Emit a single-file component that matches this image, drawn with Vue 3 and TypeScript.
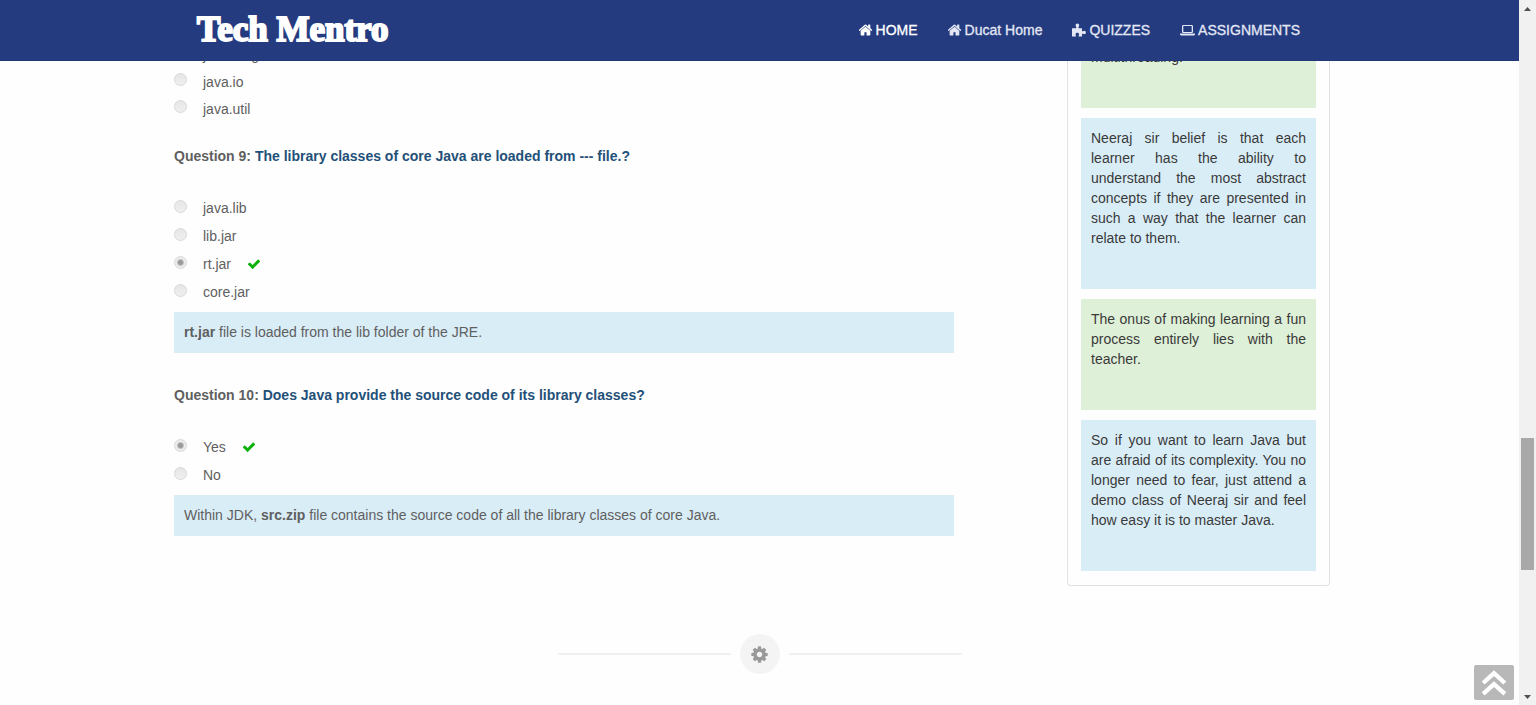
<script setup lang="ts">
import { reactive } from 'vue'

interface Option {
  text: string
  correct?: boolean
}

interface Question {
  number: number
  title: string
  options: Option[]
  chosen: string
  note: { text: string; bold?: boolean }[]
}

interface NavItem {
  label: string
  icon: 'home' | 'puzzle' | 'laptop'
  active?: boolean
}

const navItems: NavItem[] = [
  { label: 'HOME', icon: 'home', active: true },
  { label: 'Ducat Home', icon: 'home' },
  { label: 'QUIZZES', icon: 'puzzle' },
  { label: 'ASSIGNMENTS', icon: 'laptop' },
]

const previousOptions: string[] = ['java.lang', 'java.io', 'java.util']

const questions = reactive<Question[]>([
  {
    number: 9,
    title: 'The library classes of core Java are loaded from --- file.?',
    options: [{ text: 'java.lib' }, { text: 'lib.jar' }, { text: 'rt.jar', correct: true }, { text: 'core.jar' }],
    chosen: 'rt.jar',
    note: [{ text: 'rt.jar', bold: true }, { text: ' file is loaded from the lib folder of the JRE.' }],
  },
  {
    number: 10,
    title: 'Does Java provide the source code of its library classes?',
    options: [{ text: 'Yes', correct: true }, { text: 'No' }],
    chosen: 'Yes',
    note: [
      { text: 'Within JDK, ' },
      { text: 'src.zip', bold: true },
      { text: ' file contains the source code of all the library classes of core Java.' },
    ],
  },
])

const quotes: { text: string; tone: 'green' | 'blue' }[] = [
  { text: 'multithreading.', tone: 'green' },
  {
    text: 'Neeraj sir belief is that each learner has the ability to understand the most abstract concepts if they are presented in such a way that the learner can relate to them.',
    tone: 'blue',
  },
  { text: 'The onus of making learning a fun process entirely lies with the teacher.', tone: 'green' },
  {
    text: 'So if you want to learn Java but are afraid of its complexity. You no longer need to fear, just attend a demo class of Neeraj sir and feel how easy it is to master Java.',
    tone: 'blue',
  },
]
</script>

<template>
  <div class="window">
    <div class="page">
      <header class="topbar">
        <div class="topbar-inner">
          <a class="logo" href="#">Tech Mentro</a>
          <nav class="nav">
            <a v-for="item in navItems" :key="item.label" href="#" :class="['nav-link', { active: item.active }]">
              <svg v-if="item.icon === 'home'" class="nav-icon" viewBox="64 128 1664 1536" aria-hidden="true">
                <path d="M1408 992v480q0 26-19 45t-45 19h-384v-384h-256v384h-384q-26 0-45-19t-19-45v-480q0-1 .5-3t.5-3l575-474 575 474q1 2 1 6zm223-69l-62 74q-8 9-21 11h-3q-13 0-21-7l-692-577-692 577q-12 8-24 7-13-2-21-11l-62-74q-8-10-7-23.5t11-21.5l719-599q32-26 76-26t76 26l244 204v-195q0-14 9-23t23-9h192q14 0 23 9t9 23v408l219 182q10 8 11 21.5t-7 23.5z" />
              </svg>
              <svg v-else-if="item.icon === 'puzzle'" class="nav-icon puzzle" viewBox="0 0 14 14" aria-hidden="true">
                <path d="M0 5.200h3.700c.8 0 .8-.6.5-1.200-.3-.5-.6-1-.6-1.700C3.600 1.200 4.400.4 5.400.4s1.800.8 1.800 1.900c0 .7-.3 1.200-.6 1.700-.3.600-.3 1.200.5 1.200H10v2.600c0 .6.5.7 1 .4.400-.2.700-.4 1.200-.4 1 0 1.700.7 1.700 1.700s-.7 1.700-1.700 1.700c-.5 0-.8-.2-1.200-.4-.5-.3-1-.2-1 .4v2.400H7.200c-.8 0-.8-.5-.5-1 .2-.4.4-.7.4-1.200 0-1-.8-1.700-1.800-1.700s-1.800.7-1.800 1.700c0 .5.200.8.4 1.200.3.500.3 1-.5 1H0z" />
              </svg>
              <svg v-else class="nav-icon laptop" viewBox="0 0 15 14" aria-hidden="true">
                <path fill-rule="evenodd" d="M3.300 2h8.400C12.400 2 13 2.600 13 3.300v5.400c0 .7-.6 1.300-1.300 1.300H3.300C2.600 10 2 9.400 2 8.700V3.300C2 2.600 2.600 2 3.300 2zm0 1v6h8.400V3zM0 10.600h15v.9c0 .5-.6.9-1.300.9H1.300C.6 12.400 0 12 0 11.500z" />
              </svg>
              <span>{{ item.label }}</span>
            </a>
          </nav>
        </div>
      </header>

      <div class="content">
        <main class="quiz">
          <ul class="options compact">
            <li v-for="(text, i) in previousOptions" :key="text" class="option">
              <input :id="`q8-${i}`" type="radio" name="q8" disabled />
              <label :for="`q8-${i}`">{{ text }}</label>
            </li>
          </ul>
          <section v-for="q in questions" :key="q.number" class="question">
            <h2 class="title">Question {{ q.number }}: <span>{{ q.title }}</span></h2>
            <ul class="options">
              <li v-for="(option, i) in q.options" :key="option.text" class="option">
                <input :id="`q${q.number}-${i}`" v-model="q.chosen" type="radio" :name="`q${q.number}`" :value="option.text" disabled />
                <label :for="`q${q.number}-${i}`">{{ option.text }}</label>
                <svg v-if="option.correct" class="tick" viewBox="0 0 1792 1792" role="img" aria-label="Correct">
                  <path d="M1671 566q0 40-28 68l-724 724-136 136q-28 28-68 28t-68-28l-136-136-362-362q-28-28-28-68t28-68l136-136q28-28 68-28t68 28l294 295 656-657q28-28 68-28t68 28l136 136q28 28 28 68z" />
                </svg>
              </li>
            </ul>
            <p class="note"><template v-for="part in q.note" :key="part.text"><b v-if="part.bold">{{ part.text }}</b><template v-else>{{ part.text }}</template></template></p>
          </section>
        </main>

        <aside class="sidebar">
          <p v-for="quote in quotes" :key="quote.text" :class="['quote', quote.tone]">{{ quote.text }}</p>
        </aside>
      </div>

      <div class="divider">
        <span class="rule"></span>
        <span class="badge">
          <svg viewBox="0 0 1792 1792" aria-hidden="true">
            <path d="M1152 896q0-106-75-181t-181-75-181 75-75 181 75 181 181 75 181-75 75-181zm512-109v222q0 12-8 23t-20 13l-185 28q-19 54-39 91 35 50 107 138 10 12 10 25t-9 23q-27 37-99 108t-94 71q-12 0-26-9l-138-108q-44 23-91 38-16 136-29 186-7 28-36 28h-222q-14 0-24.500-8.500t-11.500-21.500l-28-184q-49-16-90-37l-141 107q-10 9-25 9-14 0-25-11-126-114-165-168-7-10-7-23 0-12 8-23 15-21 51-66.500t54-70.500q-27-50-41-99l-183-27q-13-2-21-12.500t-8-23.500v-222q0-12 8-23t19-13l186-28q14-46 39-92-40-57-107-138-10-12-10-24 0-10 9-23 26-36 98.500-107.500t94.500-71.500q13 0 26 10l138 107q44-23 91-38 16-136 29-186 7-28 36-28h222q14 0 24.500 8.500t11.500 21.500l28 184q49 16 90 37l142-107q9-9 24-9 13 0 25 10 129 119 165 170 7 8 7 22 0 12-8 23-15 21-51 66.500t-54 70.500q26 50 41 98l183 28q13 2 21 12.500t8 23.500z" />
          </svg>
        </span>
        <span class="rule"></span>
      </div>

      <button class="to-top" type="button" aria-label="Back to top">
        <svg viewBox="0 0 24 24" aria-hidden="true">
          <path d="M2 12L12 3l10 9M2 22L12 13l10 9" />
        </svg>
      </button>
    </div>

    <div class="scrollbar" aria-hidden="true">
      <svg class="arrow" viewBox="0 0 17 17"><path d="M5 11l3.500-4 3.500 4z" /></svg>
      <div class="track"><div class="thumb"></div></div>
      <svg class="arrow" viewBox="0 0 17 17"><path d="M5 7l3.500 4L12 7z" /></svg>
    </div>
  </div>
</template>

<style>
body {
  margin: 0;
  background: #fefefe;
}
</style>

<style scoped>
.window {
  display: grid;
  grid-template-columns: 1fr 17px;
  height: 100vh;
  overflow: hidden;
  font-family: "Liberation Sans", Arial, sans-serif;
  font-size: 14px;
  line-height: 20px;
  color: #5f5f5f;
}

.page {
  position: relative;
  overflow: hidden;
}

.topbar {
  position: absolute;
  inset: 0 0 auto;
  z-index: 1;
  border-bottom: 1px solid #223878;
  background: #243b80;
}

.topbar-inner {
  display: flex;
  align-items: center;
  justify-content: space-between;
  max-width: 1103px;
  height: 60px;
  margin: 0 auto;
  padding-right: 22px;
}

.logo {
  color: #fff;
  font: bold 35px/36px "Liberation Serif", "Times New Roman", serif;
  -webkit-text-stroke: 2px #fff;
  text-decoration: none;
}

.nav {
  display: flex;
  gap: 30px;
}

.nav-link {
  display: flex;
  align-items: center;
  gap: 4px;
  color: #e3e7f5;
  -webkit-text-stroke: 0.3px currentColor;
  text-decoration: none;
}

.nav-link.active {
  color: #fff;
}

.nav-icon {
  width: 14px;
  height: 14px;
  margin-right: -1px;
  fill: currentColor;
}

.nav-icon.laptop {
  width: 15px;
}

.content {
  display: flex;
  align-items: flex-start;
  justify-content: space-between;
  max-width: 1156px;
  margin: 0 auto;
  padding-right: 15px;
}

.quiz {
  flex: 0 1 780px;
  padding-top: 41px;
}

.options {
  margin: 0;
  padding: 0;
  list-style: none;
}

.option {
  display: flex;
  align-items: center;
  height: 28px;
}

.compact .option {
  height: 27px;
}

.option input {
  appearance: none;
  width: 13px;
  height: 13px;
  margin: 0 16px 4px 0;
  border: 1px solid #d8d8d8;
  border-radius: 50%;
  background: linear-gradient(#e6e6e6, #f0f0f0);
}

.option input:checked {
  background: radial-gradient(circle, #9a9a9a 0 2px, #ececec 4px);
}

.tick {
  width: 14px;
  height: 14px;
  margin-left: 16px;
  fill: #0bb00b;
}

.title {
  margin: 0 0 28px;
  font-size: 14px;
  line-height: 20px;
}

.title span {
  color: #235078;
}

.question {
  margin-top: 24px;
}

.question + .question {
  margin-top: 32px;
}

.note {
  margin: 6px 0 0;
  padding: 10px 10px 11px;
  background: #d9edf7;
}

.sidebar {
  flex: 0 0 263px;
  display: flex;
  flex-direction: column;
  gap: 10px;
  box-sizing: border-box;
  padding: 37px 13px 14px;
  border: 1px solid #e2e2e2;
  border-top: 0;
  border-radius: 0 0 4px 4px;
  color: #3a3a3a;
}

.quote {
  margin: 0;
  padding: 10px 10px 41px;
  text-align: justify;
}

.green {
  background: #dff0d8;
}

.blue {
  background: #d9edf7;
}

.divider {
  display: flex;
  align-items: center;
  justify-content: center;
  gap: 9px;
  margin-top: 48px;
}

.rule {
  flex: 0 1 173px;
  height: 2px;
  background: #f0f0f0;
}

.badge {
  display: grid;
  place-items: center;
  width: 40px;
  height: 40px;
  border-radius: 50%;
  background: #f4f4f4;
}

.badge svg {
  width: 19px;
  height: 19px;
  fill: #999;
}

.to-top {
  position: absolute;
  right: 5px;
  bottom: 5px;
  display: grid;
  place-items: center;
  width: 40px;
  height: 35px;
  padding: 0;
  border: 0;
  border-radius: 2px;
  background: #b8b8b8;
}

.to-top svg {
  width: 26px;
  height: 26px;
  fill: none;
  stroke: #fff;
  stroke-width: 4;
}

.scrollbar {
  display: flex;
  flex-direction: column;
  background: #f1f1f1;
}

.arrow {
  flex: none;
  width: 17px;
  height: 17px;
  fill: #505050;
}

.track {
  flex: 1;
  padding: 421px 2px 0;
}

.thumb {
  height: 132px;
  background: #a8a8a8;
}
</style>
